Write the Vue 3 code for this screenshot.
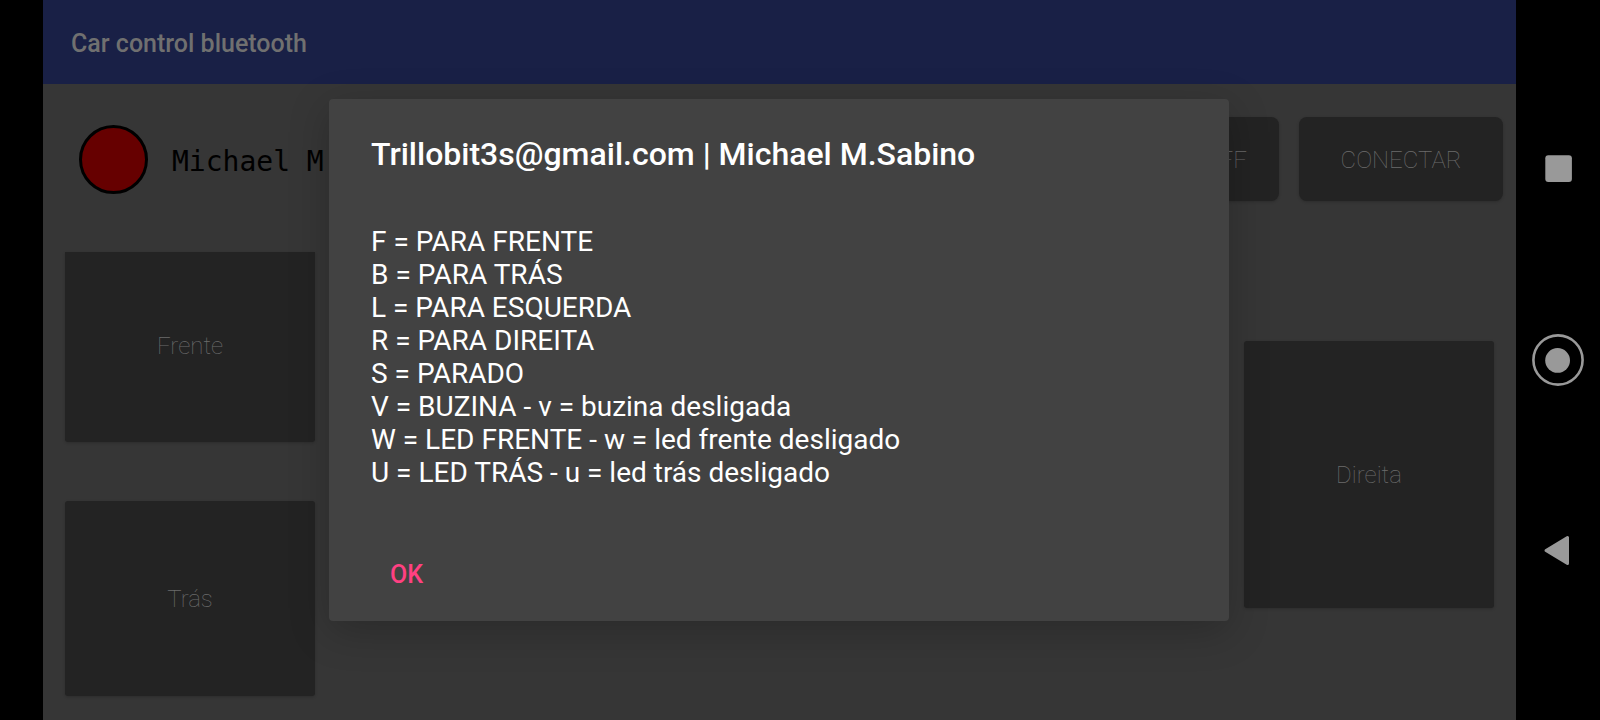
<script setup>
const commands = [
  'F = PARA FRENTE',
  'B = PARA TRÁS',
  'L = PARA ESQUERDA',
  'R = PARA DIREITA',
  'S = PARADO',
  'V = BUZINA - v = buzina desligada',
  'W = LED FRENTE - w = led frente desligado',
  'U = LED TRÁS - u = led trás desligado',
]
</script>

<template>
  <div class="screen">
    <div class="cutout"></div>

    <div class="app">
      <header class="app-bar">
        <h1>Car control bluetooth</h1>
      </header>

      <section class="status">
        <span class="dot"></span>
        <span class="name">Michael M</span>
        <button class="btn pill" type="button">OFF</button>
        <button class="btn pill connect" type="button">CONECTAR</button>
      </section>

      <main class="pad">
        <div class="column drive">
          <button class="btn forward" type="button">Frente</button>
          <button class="btn" type="button">Trás</button>
        </div>
        <div class="column steer">
          <button class="btn" type="button">Direita</button>
        </div>
      </main>

      <div class="overlay">
        <div class="dialog" role="dialog" aria-modal="true" aria-labelledby="dialog-title">
          <h2 id="dialog-title">Trillobit3s@gmail.com | Michael M.Sabino</h2>
          <ul>
            <li v-for="line in commands" :key="line">{{ line }}</li>
          </ul>
          <button class="ok" type="button">OK</button>
        </div>
      </div>
    </div>

    <nav class="system">
      <button type="button" aria-label="Recentes">
        <svg viewBox="0 0 60 60"><rect x="17.3" y="16.3" width="26.6" height="26.6" rx="3" /></svg>
      </button>
      <button type="button" aria-label="Início">
        <svg viewBox="0 0 60 60">
          <circle cx="30" cy="30" r="24.6" class="ring" />
          <circle cx="29.6" cy="30.4" r="12.4" />
        </svg>
      </button>
      <button type="button" aria-label="Voltar">
        <svg viewBox="0 0 60 60">
          <path class="back" d="M18 29.5 L39.5 16.5 V42.5 Z" />
        </svg>
      </button>
    </nav>
  </div>
</template>

<style>
body {
  margin: 0;
  background: #000;
}
</style>

<style scoped>
.screen {
  display: grid;
  grid-template-columns: 43px minmax(0, 1fr) 84px;
  min-height: 100vh;
  background: #000;
  font-family: Roboto, "Liberation Sans", sans-serif;
}

.app {
  position: relative;
  display: flex;
  flex-direction: column;
  background: #363636;
}

.app-bar {
  box-sizing: border-box;
  height: 84px;
  padding: 28px 28px 24px;
  background: #192046;
}

h1 {
  margin: 0;
  color: #707070;
  font-size: 25px;
  font-weight: 500;
  line-height: 32px;
}

.status {
  display: flex;
  align-items: center;
  gap: 20px;
  height: 84px;
  padding: 33px 13px 51px 36px;
}

.dot {
  box-sizing: border-box;
  flex: none;
  width: 69px;
  height: 69px;
  border: 3px solid #000;
  border-radius: 50%;
  background: #660000;
}

.name {
  flex: 1;
  padding: 6px 0 0 4px;
  color: #000;
  font-family: "DejaVu Sans Mono", monospace;
  font-size: 28px;
  line-height: 32px;
}

.btn {
  margin: 0;
  padding: 0 32px;
  border: 0;
  border-radius: 3px;
  background: #232323;
  box-shadow: 0 1px 3px rgba(0, 0, 0, 0.2);
  color: #6c6c6c;
  font-family: inherit;
  font-size: 24px;
  font-weight: 100;
  line-height: 32px;
}

.pill {
  align-self: stretch;
  padding-top: 2px;
  border-radius: 8px;
}

.connect {
  width: 204px;
}

.pad {
  display: flex;
  flex: 1;
  justify-content: space-between;
  padding: 0 22px 24px;
}

.column {
  display: grid;
  width: 250px;
}

.drive {
  grid-template-rows: 190fr 195fr;
  gap: 59px;
}

.forward {
  padding-bottom: 3px;
  border-radius: 0 0 3px 3px;
}

.steer {
  padding: 89px 0 88px;
}

.overlay {
  position: absolute;
  inset: 0 1px 0 0;
  display: flex;
  align-items: center;
  justify-content: center;
}

.dialog {
  box-sizing: border-box;
  width: 900px;
  max-width: 90%;
  padding: 36px 42px 16px;
  border-radius: 4px;
  background: #424242;
  box-shadow: 0 10px 40px rgba(0, 0, 0, 0.22);
  color: #fff;
}

h2 {
  margin: 0;
  font-size: 32px;
  font-weight: 500;
  line-height: 38px;
}

ul {
  margin: 52px 0 56px;
  padding: 0;
  list-style: none;
  font-size: 28px;
  line-height: 33px;
}

.ok {
  display: block;
  height: 60px;
  margin: 0;
  padding: 0 19px;
  border: 0;
  background: none;
  color: #ff4081;
  font-family: inherit;
  font-size: 25px;
  font-weight: 500;
  line-height: 32px;
}

.system {
  display: flex;
  flex-direction: column;
  align-items: center;
  justify-content: center;
  gap: 131px;
}

.system button {
  width: 60px;
  height: 60px;
  margin: 0;
  padding: 0;
  border: 0;
  background: none;
}

.system svg {
  display: block;
  width: 60px;
  height: 60px;
  fill: #999;
}

.system .ring {
  fill: none;
  stroke: #999;
  stroke-width: 2.6;
}

.system .back {
  stroke: #999;
  stroke-width: 3;
  stroke-linejoin: round;
}
</style>
